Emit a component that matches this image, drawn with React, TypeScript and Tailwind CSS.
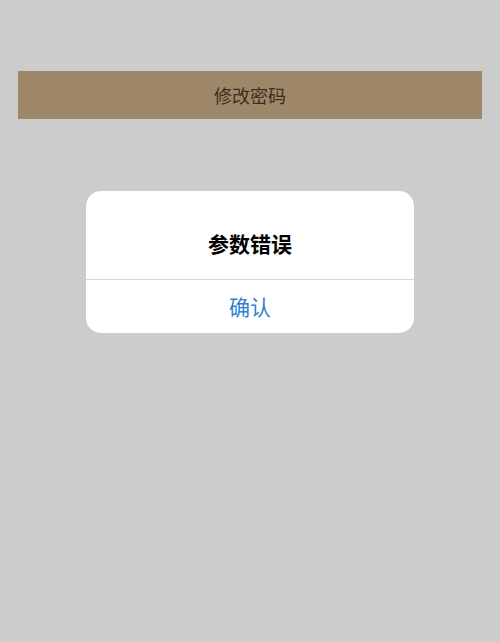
import React from "react"

const font = { fontFamily: '"Noto Sans CJK SC", "Noto Sans", sans-serif' }

function AlertDialog({ message, onConfirm }: { message: string; onConfirm?: () => void }) {
  return (
    <div className="absolute inset-0 flex justify-center pt-[191px]">
      <div className="w-[328px] h-[142px] bg-white rounded-[15px] flex flex-col overflow-hidden">
        <div className="h-[89px] flex justify-center pt-[42px] border-b border-[#d6d6d6]">
          <span className="text-[21px] font-bold text-black leading-none">{message}</span>
        </div>
        <button
          onClick={onConfirm}
          className="flex-1 flex items-center justify-center text-[21px] text-[#2f7fd0] leading-none"
        >
          确认
        </button>
      </div>
    </div>
  )
}

export default function App() {
  return (
    <div className="relative w-[500px] h-[642px] bg-[#cccccc] overflow-hidden" style={font}>
      <div className="px-[18px]">
        <div className="h-[34px] border-b border-[#d1d1d1]" />
        <button className="mt-[37px] w-full h-[48px] bg-[#9e8768] text-[#3b2d1a] text-[18px] flex items-center justify-center">
          修改密码
        </button>
      </div>
      <AlertDialog message="参数错误" />
    </div>
  )
}
